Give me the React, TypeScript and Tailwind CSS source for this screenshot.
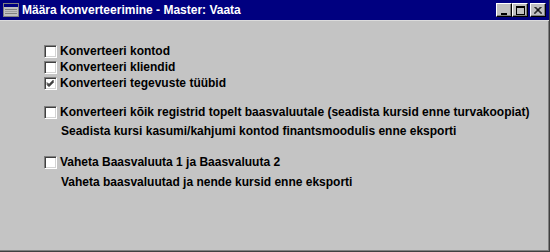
import React from "react";

const font = { fontFamily: '"Liberation Sans", Arial, sans-serif' };

function CheckBox({ checked }: { checked?: boolean }) {
  return (
    <span className="relative inline-flex h-[13px] w-[13px] shrink-0 border-t border-l border-t-[#808080] border-l-[#808080] border-b border-r border-b-white border-r-white bg-white shadow-[inset_1px_1px_0_#404040,inset_-1px_-1px_0_#d4d4d4]">
      {checked && (
        <svg viewBox="0 0 11 11" className="absolute left-0 top-0 h-[11px] w-[11px]">
          <path d="M2 4.5 L4 6.5 L8.5 2 M2 5.5 L4 7.5 L8.5 3 M2 6.5 L4 8.5 L8.5 4" stroke="#000" strokeWidth="1" fill="none" />
        </svg>
      )}
    </span>
  );
}

function Row({ label, checked }: { label: string; checked?: boolean }) {
  return (
    <div className="flex h-[16px] items-center gap-[3px]">
      <CheckBox checked={checked} />
      <span className="text-[12px] font-bold leading-none text-black">{label}</span>
    </div>
  );
}

function TitleButton({ children }: { children: React.ReactNode }) {
  return (
    <div className="flex h-[14px] w-[16px] items-center justify-center border-t border-l border-t-white border-l-white border-b border-r border-b-black border-r-black bg-[#c0c0c0] shadow-[inset_-1px_-1px_0_#808080]">
      {children}
    </div>
  );
}

export default function App() {
  return (
    <div style={font} className="flex h-[252px] w-[550px] flex-col border-r border-b border-r-[#404040] border-b-[#404040] bg-[#c4c4c4] shadow-[inset_-1px_-1px_0_#808080]">
      {/* Title bar */}
      <div className="flex h-[20px] shrink-0 items-center bg-[#000080] pl-[3px] pr-[3px]">
        <svg width="16" height="14" viewBox="0 0 16 14" className="shrink-0">
          <rect x="0.5" y="0.5" width="15" height="13" fill="#c0c0c0" stroke="#808080" />
          <rect x="1" y="1" width="14" height="3" fill="#000080" />
          <rect x="2" y="6" width="12" height="1" fill="#808080" />
          <rect x="2" y="8" width="12" height="1" fill="#a0a0a0" />
          <rect x="2" y="10" width="12" height="1" fill="#808080" />
        </svg>
        <span className="ml-[3px] text-[12px] font-bold leading-none text-white">
          Määra konverteerimine - Master: Vaata
        </span>
        <div className="ml-auto flex items-center">
          <TitleButton>
            <div className="mt-[7px] h-[2px] w-[6px] bg-black" />
          </TitleButton>
          <TitleButton>
            <div className="h-[9px] w-[9px] border border-t-2 border-black" />
          </TitleButton>
          <div className="w-[2px]" />
          <TitleButton>
            <svg width="8" height="7" viewBox="0 0 8 7">
              <path d="M0.5 0 L7.5 7 M1.5 0 L8 6.5 M7.5 0 L0.5 7 M6.5 0 L0 6.5" stroke="#000" strokeWidth="1" />
            </svg>
          </TitleButton>
        </div>
      </div>
      <div className="h-px bg-[#dcdcdc]" />

      {/* Content */}
      <div className="flex flex-col pl-[44px] pt-[22px]">
        <Row label="Konverteeri kontod" />
        <Row label="Konverteeri kliendid" />
        <Row label="Konverteeri tegevuste tüübid" checked />

        <div className="mt-[13px]">
          <Row label="Konverteeri kõik registrid topelt baasvaluutale (seadista kursid enne turvakoopiat)" />
          <div className="mt-[3px] pl-[17px] text-[12px] font-bold leading-[16px] text-black">
            Seadista kursi kasumi/kahjumi kontod finantsmoodulis enne eksporti
          </div>
        </div>

        <div className="mt-[15px]">
          <Row label="Vaheta Baasvaluuta 1 ja Baasvaluuta 2" />
          <div className="mt-[4px] pl-[17px] text-[12px] font-bold leading-[16px] text-black">
            Vaheta baasvaluutad ja nende kursid enne eksporti
          </div>
        </div>
      </div>
    </div>
  );
}
